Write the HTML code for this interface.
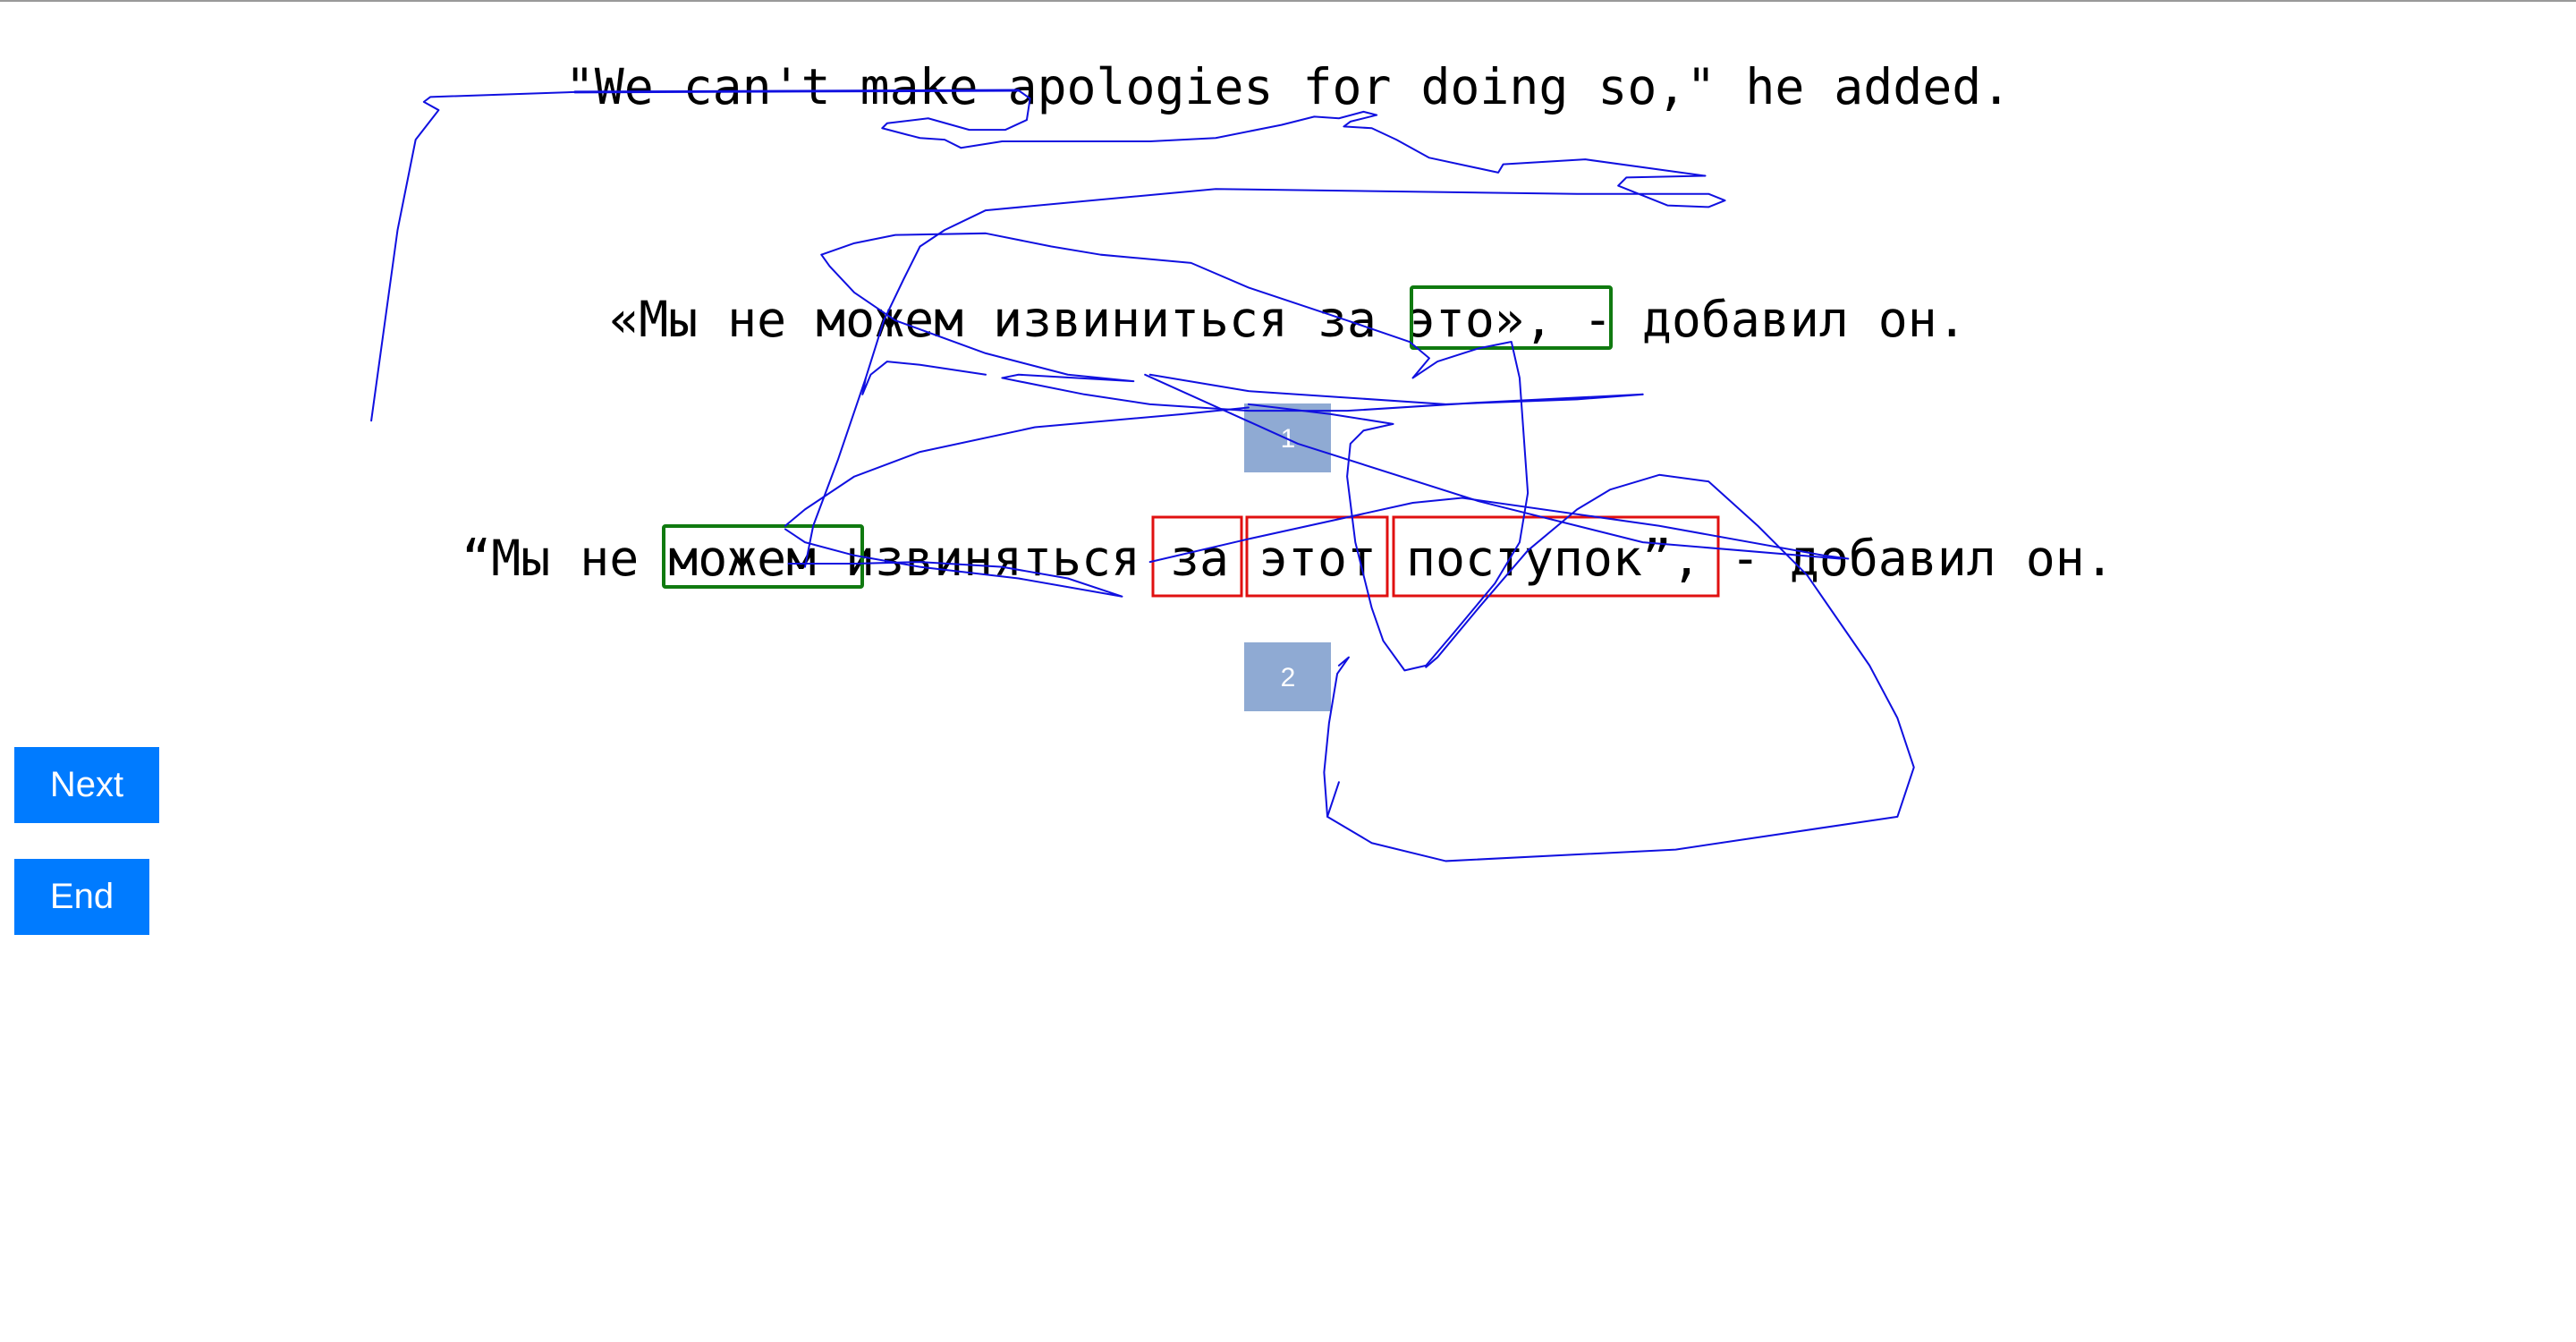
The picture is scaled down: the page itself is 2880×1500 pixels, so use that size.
<!DOCTYPE html>
<html><head><meta charset="utf-8"><style>
html,body{margin:0;padding:0;background:#fff;width:2880px;height:1500px;overflow:hidden;position:relative}
.topline{position:absolute;left:0;top:0;width:2880px;height:2px;background:#999}
.btn{position:absolute;left:16px;background:#007bff;color:#fff;font-family:"Liberation Sans",Arial,sans-serif;font-size:40px;display:flex;align-items:center;justify-content:center}
svg{position:absolute;left:0;top:0}
</style></head><body>
<div class="topline"></div>
<div class="btn" style="top:835px;width:162px;height:85px">Next</div>
<div class="btn" style="top:960px;width:151px;height:85px">End</div>
<svg width="2880" height="1500" viewBox="0 0 2880 1500">
<g font-family="'DejaVu Sans Mono','Liberation Mono',monospace" font-size="54.8" fill="#000" text-anchor="middle">
<text x="1440" y="116" xml:space="preserve">"We can't make apologies for doing so," he added.</text>
<text x="1440" y="376" xml:space="preserve">«Мы не можем извиниться за это», - добавил он.</text>
<text x="1440" y="643" xml:space="preserve">“Мы не можем извиняться за этот поступок”, - добавил он.</text>
</g>
<g fill="none">
<rect x="1578" y="321" width="223" height="68" stroke="#107a10" stroke-width="4" rx="2"/>
<rect x="742" y="588" width="222" height="68" stroke="#107a10" stroke-width="4" rx="2"/>
<rect x="1289" y="578" width="99" height="88" stroke="#e01010" stroke-width="3"/>
<rect x="1394" y="578" width="157" height="88" stroke="#e01010" stroke-width="3"/>
<rect x="1558" y="578" width="363" height="88" stroke="#e01010" stroke-width="3"/>
</g>
<rect x="1391" y="451" width="97" height="77" fill="#8faad3"/>
<rect x="1391" y="718" width="97" height="77" fill="#8faad3"/>
<g font-family="'Liberation Sans',Arial,sans-serif" font-size="30" fill="#fff" text-anchor="middle">
<text x="1440" y="500">1</text>
<text x="1440" y="767">2</text>
</g>
<g transform="scale(1.8367)" fill="none" stroke="#1010e0" stroke-width="1.1" stroke-linejoin="round" stroke-linecap="round">
<path d="M226,256 L242,140 L253,85 L267,67 L258,62 L262,59 L350,56 L620,55 L627,60 L625,73 L612,79 L590,79 L565,72 L540,75 L537,78 L560,84 L575,85 L585,90 L610,86 L650,86 L700,86 L740,84 L780,76 L800,71 L815,72 L830,68 L838,70 L822,74 L818,77 L835,78 L850,85 L870,96 L912,105 L915,100 L965,97 L1038,107 L990,108 L985,113 L1015,125 L1040,126 L1050,122 L1040,118 L960,118 L740,115 L600,128 L575,140 L560,150 L550,170 L538,195 L527,230 L510,280 L495,320 L490,345"/>
<path d="M350,56 L620,55" stroke-width="1.6"/>
<path d="M500,155 L520,148 L545,143 L600,142 L640,150 L670,155 L725,160 L760,175 L820,195 L858,208 L870,218 L860,230 L875,220 L900,212 L920,208 L925,230 L930,300 L925,330 L910,355 L885,385 L868,405 L855,408 L842,390 L835,370 L825,330 L820,290 L822,270 L830,262 L848,258 L810,252 L760,246"/>
<path d="M500,155 L505,162 L520,178 L545,195 L600,215 L650,228 L690,232 L620,228 L610,230 L660,240 L700,246 L760,250 L820,250 L900,245 L1000,240 L960,243 L880,246 L820,242 L760,238 L700,228"/>
<path d="M697,228 L790,270 L900,305 L1000,330 L1120,340"/>
<path d="M478,320 L490,310 L520,290 L560,275 L630,260 L720,252 L760,248"/>
<path d="M478,322 L490,330 L520,338 L560,345 L620,352 L683,363 L650,352 L610,345 L560,342 L520,343 L480,343"/>
<path d="M700,342 L760,328 L860,306 L890,303 L1010,320 L1110,338 L1125,340"/>
<path d="M527,230 L525,240 L530,228 L540,220 L560,222 L600,228"/>
<path d="M815,405 L821,400 L814,410 L809,440 L806,470 L808,497 L835,513 L880,524 L1020,517 L1155,497 L1165,467 L1155,437 L1138,405 L1100,350 L1070,320 L1040,293 L1010,289 L980,298 L960,310 L930,335 L900,370 L875,400 L868,406"/>
<path d="M808,497 L815,476"/>
</g>
</svg>
</body></html>
